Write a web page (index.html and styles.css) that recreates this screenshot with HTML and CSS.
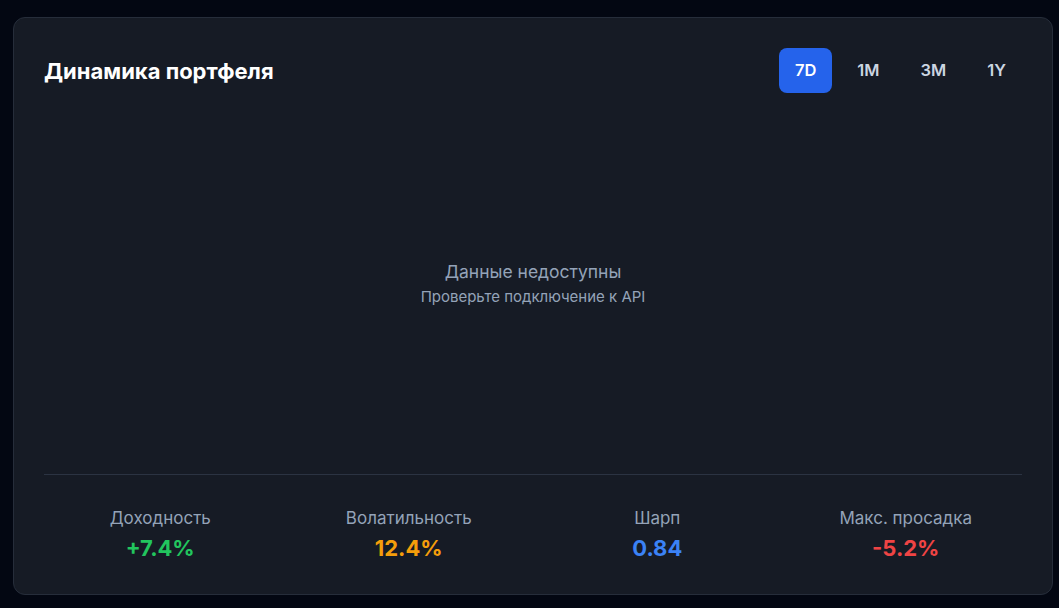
FILE: index.html
```html
<!DOCTYPE html>
<html lang="ru">
<head>
<meta charset="utf-8">
<title>Динамика портфеля</title>
<link rel="stylesheet" href="styles.css">
</head>
<body>
<section class="card">
  <header class="card-header">
    <h2 class="title">Динамика портфеля</h2>
    <div class="ranges">
      <button class="range active">7D</button>
      <button class="range">1M</button>
      <button class="range">3M</button>
      <button class="range">1Y</button>
    </div>
  </header>
  <div class="chart">
    <p class="empty-title">Данные недоступны</p>
    <p class="empty-sub">Проверьте подключение к API</p>
  </div>
  <div class="stats">
    <div class="stat">
      <div class="stat-label">Доходность</div>
      <div class="stat-value green">+7.4%</div>
    </div>
    <div class="stat">
      <div class="stat-label">Волатильность</div>
      <div class="stat-value orange">12.4%</div>
    </div>
    <div class="stat">
      <div class="stat-label">Шарп</div>
      <div class="stat-value blue">0.84</div>
    </div>
    <div class="stat">
      <div class="stat-label">Макс. просадка</div>
      <div class="stat-value red">-5.2%</div>
    </div>
  </div>
</section>
</body>
</html>
```

FILE: styles.css
```css
* { box-sizing: border-box; }
html, body { margin: 0; padding: 0; }
body {
  background: #030712;
  font-family: Inter, "Noto Sans", sans-serif;
  padding: 17px 6px 13px 13px;
  height: 608px;
}
.card {
  width: 1040px;
  height: 578px;
  background: #161b25;
  border: 1px solid #262d3a;
  border-radius: 12px;
  padding: 30px;
  display: flex;
  flex-direction: column;
}
.card-header {
  display: flex;
  justify-content: space-between;
  align-items: center;
  height: 45px;
}
.title {
  margin: 0;
  color: #ffffff;
  font-size: 22px;
  font-weight: 700;
  line-height: 28px;
}
.ranges {
  display: flex;
  gap: 9px;
}
.range {
  font-family: inherit;
  border: 0;
  background: transparent;
  color: #cbd5e1;
  font-size: 16.5px;
  font-weight: 600;
  line-height: 21px;
  padding: 12px 16px;
  border-radius: 8px;
  cursor: pointer;
}
.range.active {
  background: #2563eb;
  color: #ffffff;
}
.chart {
  flex: 1;
  display: flex;
  flex-direction: column;
  align-items: center;
  justify-content: center;
  gap: 3px;
  border-bottom: 1px solid #2b3342;
}
.empty-title {
  margin: 0;
  color: #94a3b8;
  font-size: 17.5px;
  line-height: 24px;
}
.empty-sub {
  margin: 0;
  color: #94a3b8;
  font-size: 15px;
  line-height: 20px;
}
.stats {
  display: grid;
  grid-template-columns: repeat(4, 1fr);
  gap: 16px;
  padding: 31px 0 2px;
}
.stat {
  text-align: center;
}
.stat-label {
  color: #94a3b8;
  font-size: 17px;
  line-height: 24px;
}
.stat-value {
  font-size: 22px;
  font-weight: 700;
  line-height: 28px;
  margin-top: 4px;
}
.green { color: #22c55e; }
.orange { color: #f59e0b; }
.blue { color: #3b82f6; }
.red { color: #ef4444; }
```
